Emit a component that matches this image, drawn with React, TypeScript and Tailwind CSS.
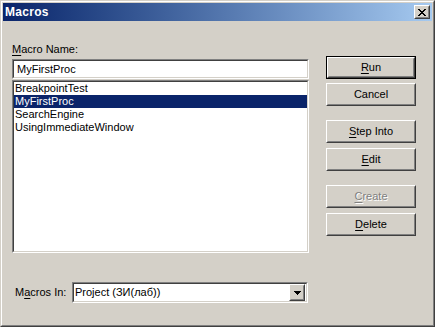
import React from "react";

const font = { fontFamily: '"Liberation Sans", Arial, sans-serif' };

function Sunken({ className = "", children }: { className?: string; children?: React.ReactNode }) {
  return (
    <div className={`border border-t-[#808080] border-l-[#808080] border-b-white border-r-white ${className}`}>
      <div className="h-full w-full border border-t-[#404040] border-l-[#404040] border-b-[#d4d0c8] border-r-[#d4d0c8] bg-white">
        {children}
      </div>
    </div>
  );
}

function Raised({ className = "", children }: { className?: string; children?: React.ReactNode }) {
  return (
    <div className={`border border-t-white border-l-white border-b-[#404040] border-r-[#404040] bg-[#d4d0c8] ${className}`}>
      <div className="h-full w-full border border-t-[#d4d0c8] border-l-[#d4d0c8] border-b-[#808080] border-r-[#808080] flex items-center justify-center">
        {children}
      </div>
    </div>
  );
}

function U({ children }: { children: React.ReactNode }) {
  return <span className="underline underline-offset-[2px] decoration-1">{children}</span>;
}

function Btn({
  children,
  className = "",
  def = false,
  disabled = false,
}: {
  children: React.ReactNode;
  className?: string;
  def?: boolean;
  disabled?: boolean;
}) {
  const label = (
    <span
      className={`text-[11px] leading-[13px] ${disabled ? "text-[#808080] [text-shadow:1px_1px_0_#ffffff]" : "text-black"}`}
    >
      {children}
    </span>
  );
  if (def) {
    return (
      <div className={`h-[23px] w-[90px] border border-black ${className}`}>
        <Raised className="h-full w-full">{label}</Raised>
      </div>
    );
  }
  return <Raised className={`h-[23px] w-[90px] ${className}`}>{label}</Raised>;
}

export default function App() {
  const items = ["BreakpointTest", "MyFirstProc", "SearchEngine", "UsingImmediateWindow"];
  return (
    <div style={font} className="w-[435px] h-[327px] bg-[#d4d0c8] text-black">
      <div className="h-full w-full border border-t-[#d4d0c8] border-l-[#d4d0c8] border-b-[#404040] border-r-[#404040]">
        <div className="h-full w-full border border-t-white border-l-white border-b-[#808080] border-r-[#808080] p-[1px] flex flex-col">
          {/* Title bar */}
          <div className="h-[18px] flex items-center justify-between bg-gradient-to-r from-[#0a246a] to-[#a6caf0] pl-[2px] pr-[2px]">
            <span className="text-white font-bold text-[12px] leading-[14px] tracking-[0.3px]">Macros</span>
            <Raised className="h-[14px] w-[16px]">
              <svg width="8" height="7" viewBox="0 0 8 7" shapeRendering="crispEdges">
                <path
                  d="M0 0h2v1h-2zM6 0h2v1h-2zM1 1h2v1h-2zM5 1h2v1h-2zM2 2h4v1h-4zM3 3h2v1h-2zM2 4h4v1h-4zM1 5h2v1h-2zM5 5h2v1h-2zM0 6h2v1h-2zM6 6h2v1h-2z"
                  fill="#000"
                />
              </svg>
            </Raised>
          </div>
          {/* Body */}
          <div className="flex flex-1 pl-[9px]">
            <div className="flex flex-col w-[297px]">
              <div className="mt-[22px] h-[13px] text-[11px] leading-[13px]">
                <U>M</U>acro Name:
              </div>
              <Sunken className="mt-[3px] h-[20px]">
                <div className="pl-[3px] pt-[2px] text-[11px] leading-[13px]">MyFirstProc</div>
              </Sunken>
              <Sunken className="mt-[1px] h-[173px]">
                <div className="flex flex-col">
                  {items.map((it) => (
                    <div
                      key={it}
                      className={`h-[13px] pl-[1px] text-[11px] leading-[13px] ${
                        it === "MyFirstProc" ? "bg-[#0a246a] text-white" : ""
                      }`}
                    >
                      {it}
                    </div>
                  ))}
                </div>
              </Sunken>
              <div className="mt-[29px] flex items-center">
                <div className="w-[60px] pl-[3px] text-[11px] leading-[13px]">
                  M<U>a</U>cros In:
                </div>
                <Sunken className="h-[21px] w-[236px]">
                  <div className="flex h-full items-center justify-between pr-[1px]">
                    <span className="pl-[1px] text-[11px] leading-[13px]">Project (ЗИ(лаб))</span>
                    <Raised className="h-[17px] w-[16px]">
                      <svg width="7" height="4" viewBox="0 0 7 4" shapeRendering="crispEdges">
                        <path d="M0 0h7v1h-7zM1 1h5v1h-5zM2 2h3v1h-3zM3 3h1v1h-1z" fill="#000" />
                      </svg>
                    </Raised>
                  </div>
                </Sunken>
              </div>
            </div>
            <div className="ml-[17px] flex flex-col">
              <Btn def className="mt-[35px]">
                <U>R</U>un
              </Btn>
              <Btn className="mt-[4px]">Cancel</Btn>
              <Btn className="mt-[14px]">
                <U>S</U>tep Into
              </Btn>
              <Btn className="mt-[5px]">
                <U>E</U>dit
              </Btn>
              <Btn disabled className="mt-[14px]">
                <U>C</U>reate
              </Btn>
              <Btn className="mt-[5px]">
                <U>D</U>elete
              </Btn>
            </div>
          </div>
        </div>
      </div>
    </div>
  );
}
